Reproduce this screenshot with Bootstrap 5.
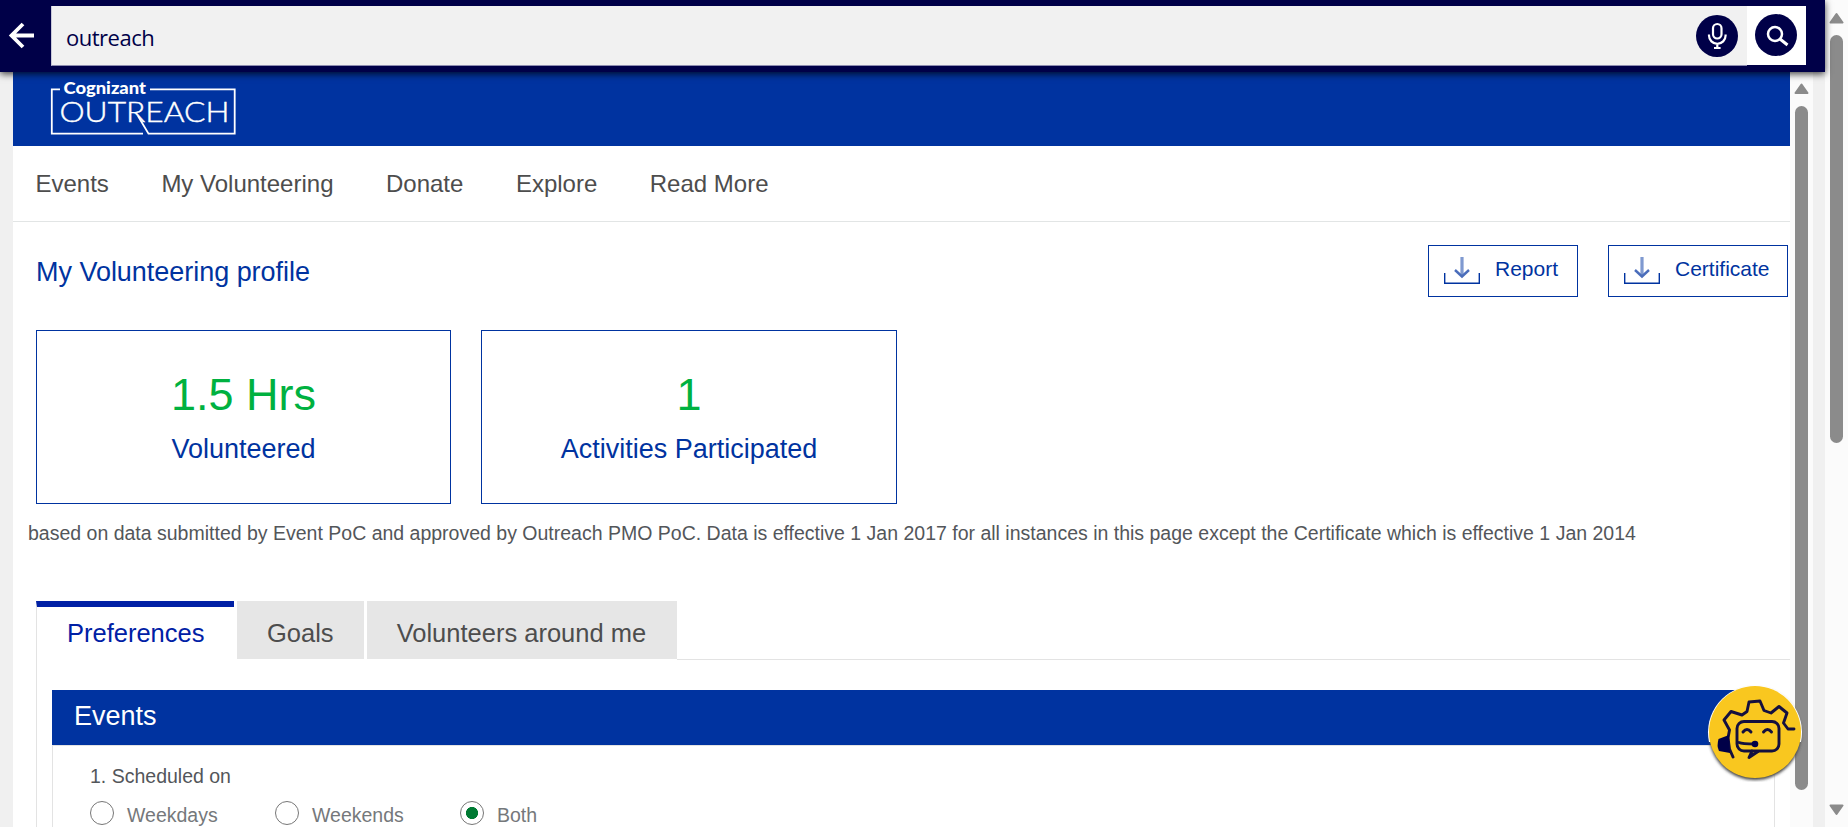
<!DOCTYPE html>
<html lang="en">
<head>
<meta charset="utf-8">
<title>Outreach</title>
<link rel="stylesheet" href="https://cdn.jsdelivr.net/npm/bootstrap@5.3.0/dist/css/bootstrap.min.css">
<style>
:root{--navy:#000048;--blue:#0033a0;--grey:#53565a}
html,body{height:100%;overflow:hidden}
body{font-family:"Liberation Sans",Arial,sans-serif;background:#f0f0f0;color:#53565a}
.shell{height:827px;width:1848px}
.topbar{height:72px;flex-shrink:0;background:var(--navy);box-shadow:0 2px 7px rgba(0,0,0,.75);z-index:5;position:relative;padding:6px 19px 0 0}
.back-link{width:51px;height:59px;padding:16px 0 0 8px}
.query{height:60px;background:#f1f1f1;border-bottom:1px solid #8d8db0;border-left:1px solid #c8c8d8;color:var(--navy);padding-left:14px;font:22px/62px "Open Sans",sans-serif;letter-spacing:-.5px}
.find{width:59px;height:59px;background:#fff}
.frame-area{padding-left:13px;min-height:0}
.page{width:1777px;background:#fff;overflow:hidden}
.brand-bar{height:74px;background:var(--blue);padding:4px 0 0 32px}
.menu{height:76px;border-bottom:1px solid #e2e5e5;font-size:24px;line-height:75px;padding-left:22.5px;gap:52.5px;color:#4d4d4d}
.title-row{height:108px;padding:23px 2px 0 23px}
.title-row h1{font-size:27px;line-height:54px;letter-spacing:-.03px;color:var(--blue)}
.dl{height:52px;border:1px solid var(--blue);color:var(--blue);font-size:21px;line-height:46px;padding:0 15px;background:#fff;gap:15px}
.dl.report{width:150px;margin-right:30px}
.dl.certificate{width:180px}
.dl svg{margin-top:11px}
.stats{padding-left:23px;gap:30px}
.stat{width:415px;height:174px;border:1px solid var(--blue);color:var(--blue);padding-top:38px;font-size:27px;line-height:56px}
.stat+.stat{width:416px}
.stat strong{font-weight:400;color:#00b140;font-size:45px;line-height:52px}
.note{font-size:19.5px;line-height:26px;padding:16px 0 0 15px;height:97px;color:#53565a;white-space:nowrap}
.tabs{padding-left:23px;height:59px}
.tab{font-size:25.5px;line-height:64px;padding:0 30px;margin-right:3px;height:58px;background:#e6e6e6;color:#4d4d4d;white-space:nowrap;overflow:hidden}
.tab.on{width:198px;height:59px;background:#fff;color:#0020a5;border-top:6px solid #0020a5;border-left:1px solid #e3e3e3;line-height:52px}
.tab.end{margin-right:0;padding-right:31px}
.tab-line{border-bottom:1px solid #e3e3e3}
.pane{margin-left:23px;border-left:1px solid #e3e3e3;padding:30px 15px 0 15px;height:200px}
.pane h2{height:55px;background:var(--blue);color:#fff;font-size:27px;line-height:53px;padding-left:22px}
.prefs{border:1px solid #e3e3e3;height:150px;padding:16px 0 0 37px;font-size:19.5px;line-height:28px;color:#53565a}
.opts{font-size:19.5px;line-height:28px;color:#75787b;margin-top:11px}
.opt{width:185px;gap:13px}
.ring{width:24px;height:24px;border:1px solid #777;border-radius:50%;background:#fff}
.ring.sel{background:radial-gradient(circle,#007a33 0 5.7px,#fff 6.4px)}
.inner-bar{width:23px;background:#fbfbfb}
.gutter{width:12px}
.outer-bar{width:23px;background:#fbfbfb}
.bot{position:absolute;left:1706px;top:685px;z-index:6}
</style>
</head>
<body>
<div class="shell d-flex position-relative">
 <div class="d-flex flex-column flex-grow-1">
  <header class="topbar d-flex">
   <a class="back-link" href="#" aria-label="Back"><svg class="d-block" width="28" height="28" viewBox="0 0 28 28" fill="none" stroke="#fff" stroke-width="3.800"><path d="M26 13.500H4M15 2L3.500 13.500L15 25"/></svg></a>
   <div class="query flex-grow-1 d-flex justify-content-between"><span>outreach</span>
    <svg width="60" height="59" viewBox="0 0 60 59"><circle cx="30" cy="30" r="21" fill="#000048"/><g fill="none" stroke="#fff" stroke-width="2.200"><rect x="26" y="18" width="8.500" height="14.500" rx="4.250"/><path d="M22 28.500v1a8.300 8.300 0 0 0 16.600 0v-1M30.300 38v5M27 42h6.600"/></g></svg></div>
   <a class="find" href="#" aria-label="Search"><svg class="d-block" width="59" height="59" viewBox="0 0 59 59"><circle cx="29" cy="29" r="21" fill="#000048"/><g fill="none" stroke="#fff" stroke-width="2.500"><circle cx="28" cy="28" r="7"/><path d="M33 33l7.500 6" stroke-width="3"/></g></svg></a>
  </header>
  <div class="frame-area d-flex flex-grow-1">
   <main class="page">
    <div class="brand-bar"><svg class="d-block" width="200" height="62" viewBox="45 76 200 62"><g fill="none" stroke="#fff" stroke-width="1.800"><path d="M60 89.300H51.800V133.600H143M150 89.300H234.700V133.600H148.500L138 116"/></g><text x="63.500" y="93.500" font-family="Lato" font-weight="900" font-size="17.500" textLength="82.500" lengthAdjust="spacingAndGlyphs" fill="#fff">Cognizant</text><text x="59.500" y="122" font-family="Lato" font-weight="300" font-size="27" textLength="170" lengthAdjust="spacingAndGlyphs" fill="#fff" stroke="#fff" stroke-width=".4">OUTREACH</text></svg></div>
    <nav class="menu d-flex"><span>Events</span><span>My Volunteering</span><span>Donate</span><span>Explore</span><span>Read More</span></nav>
    <div class="title-row d-flex"><h1 class="fw-normal m-0 me-auto">My Volunteering profile</h1>
     <button class="dl report d-flex"><svg width="36" height="28" viewBox="0 0 36 28" fill="none"><path d="M.700 16v10.300h34.600V16" stroke="#0033a0" stroke-width="1.400"/><path d="M18 0v19" stroke="#7f99d0" stroke-width="3.200"/><path d="M11 13l7 6.500 7-6.500" stroke="#4a6dbb" stroke-width="2.400"/></svg>Report</button>
     <button class="dl certificate d-flex"><svg width="36" height="28" viewBox="0 0 36 28" fill="none"><path d="M.700 16v10.300h34.600V16" stroke="#0033a0" stroke-width="1.400"/><path d="M18 0v19" stroke="#7f99d0" stroke-width="3.200"/><path d="M11 13l7 6.500 7-6.500" stroke="#4a6dbb" stroke-width="2.400"/></svg>Certificate</button></div>
    <section class="stats d-flex text-center"><div class="stat d-flex flex-column"><strong>1.5 Hrs</strong><span>Volunteered</span></div><div class="stat d-flex flex-column"><strong>1</strong><span>Activities Participated</span></div></section>
    <p class="note m-0">based on data submitted by Event PoC and approved by Outreach PMO PoC. Data is effective 1 Jan 2017 for all instances in this page except the Certificate which is effective 1 Jan 2014</p>
    <div class="tabs d-flex"><div class="tab on">Preferences</div><div class="tab">Goals</div><div class="tab end">Volunteers around me</div><div class="tab-line flex-grow-1"></div></div>
    <section class="pane"><h2 class="my-0 ms-0 me-1 fw-normal">Events</h2><div class="prefs"><div>1. Scheduled on</div><div class="opts d-flex"><label class="opt d-flex"><i class="ring"></i>Weekdays</label><label class="opt d-flex"><i class="ring"></i>Weekends</label><label class="opt d-flex"><i class="ring sel"></i>Both</label></div></div></section>
   </main>
   <div class="inner-bar"><svg class="d-block" width="23" height="755" fill="#8b8b8b"><path d="M11.500 12.500L17.500 21H5.500Z" stroke="#8b8b8b" stroke-width="2" stroke-linejoin="round"/><rect x="5" y="34" width="13" height="684" rx="6.500"/></svg></div>
   <div class="gutter"></div>
  </div>
 </div>
 <div class="outer-bar"><svg class="d-block" width="23" height="827" fill="#8b8b8b"><g stroke="#8b8b8b" stroke-width="2" stroke-linejoin="round"><path d="M11.500 14L17.500 22.500H5.500ZM11.500 814L17.500 805.500H5.500Z"/></g><rect x="5" y="35" width="13" height="408" rx="6.500"/></svg></div>
 <svg class="bot" width="100" height="97" viewBox="1706 685 100 97"><defs><filter id="sh"><feGaussianBlur stdDeviation="1.500"/></filter></defs><circle cx="1755" cy="734" r="46" fill="#444" filter="url(#sh)"/><path d="M1709 742A47 47 0 1 1 1801 742" fill="#fff"/><circle cx="1755" cy="732" r="46" fill="#f9c71f"/>
  <g fill="none" stroke="#14103f" stroke-width="2.900" stroke-linejoin="round" stroke-linecap="round"><path d="M1733 757L1729.500 749L1728 738L1729.500 730L1724 720L1731 711.500L1742 715L1747 711.500L1749 702L1760 701L1764 710.500L1771 713L1779 706.500L1787 713L1783.500 723L1788 729H1794"/><rect x="1737" y="721.500" width="42" height="29.500" rx="7"/><path d="M1752 751L1749 757.500L1758 751.500M1743 732q4-5 8 0M1763.500 732q4-5 8 0M1739 742.500Q1742 744 1755 744"/></g><circle cx="1755" cy="744" r="3.300" fill="#000048"/><path d="M1729 735L1718.500 739Q1716.500 746 1719 751L1730 753Z" fill="#000048"/></svg>
</div>
<script src="https://cdn.jsdelivr.net/npm/bootstrap@5.3.0/dist/js/bootstrap.bundle.min.js"></script>
</body>
</html>
